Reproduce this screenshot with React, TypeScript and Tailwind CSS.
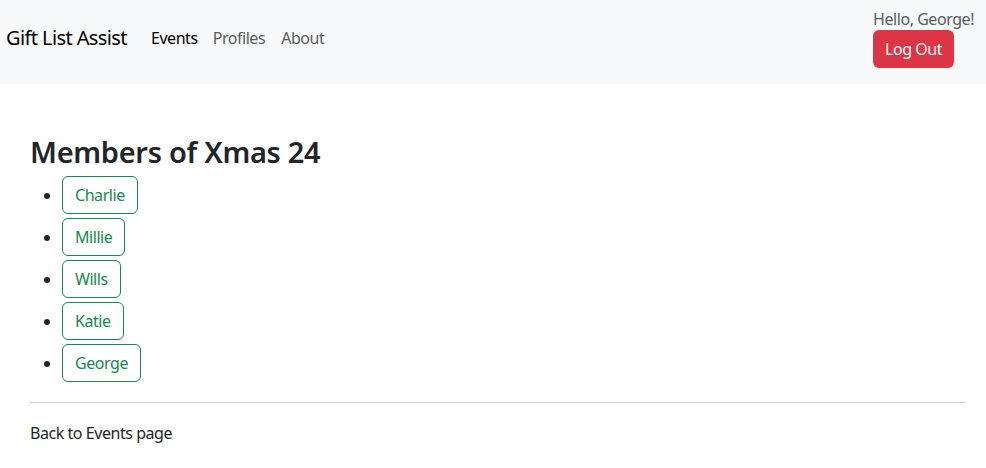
import React from "react";

const members = ["Charlie", "Millie", "Wills", "Katie", "George"];

export default function App() {
  return (
    <div
      className="min-h-screen bg-white tracking-[-0.45px] text-[#212529]"
      style={{ fontFamily: '"Noto Sans", "Open Sans", sans-serif' }}
    >
      <nav className="flex h-[84px] items-start justify-between bg-[#f8f9fa] pl-[6px] pr-[12px]">
        <div className="flex h-[76px] items-center">
          <span className="mr-[24px] text-[20px] tracking-[-0.6px] text-black">Gift List Assist</span>
          <a className="text-[16px] text-black">Events</a>
          <a className="ml-[15px] text-[16px] text-[#595c5f]">Profiles</a>
          <a className="ml-[16px] text-[16px] text-[#595c5f]">About</a>
        </div>
        <div className="flex flex-col items-start pt-[8px]">
          <span className="text-[16px] leading-[22px] text-[#595c5f]">Hello, George!</span>
          <button className="h-[38px] rounded-[6px] bg-[#dc3545] px-[12px] text-[16px] text-white">
            Log Out
          </button>
        </div>
      </nav>

      <main className="pl-[30px] pr-[20px] pt-[50px]">
        <h2 className="mb-[4px] text-[29px] font-semibold leading-[36px] tracking-[-0.3px]">
          Members of Xmas 24
        </h2>
        <ul className="mb-[16px] list-disc pl-[32px]">
          {members.map((m) => (
            <li key={m} className="py-[2px]">
              <button className="h-[38px] rounded-[6px] border border-[#198754] px-[12px] text-[16px] text-[#198754]">
                {m}
              </button>
            </li>
          ))}
        </ul>
        <hr className="my-[18px] border-t border-[#cfcfcf]" />
        <a className="text-[16px] text-[#212529]">Back to Events page</a>
      </main>
    </div>
  );
}
